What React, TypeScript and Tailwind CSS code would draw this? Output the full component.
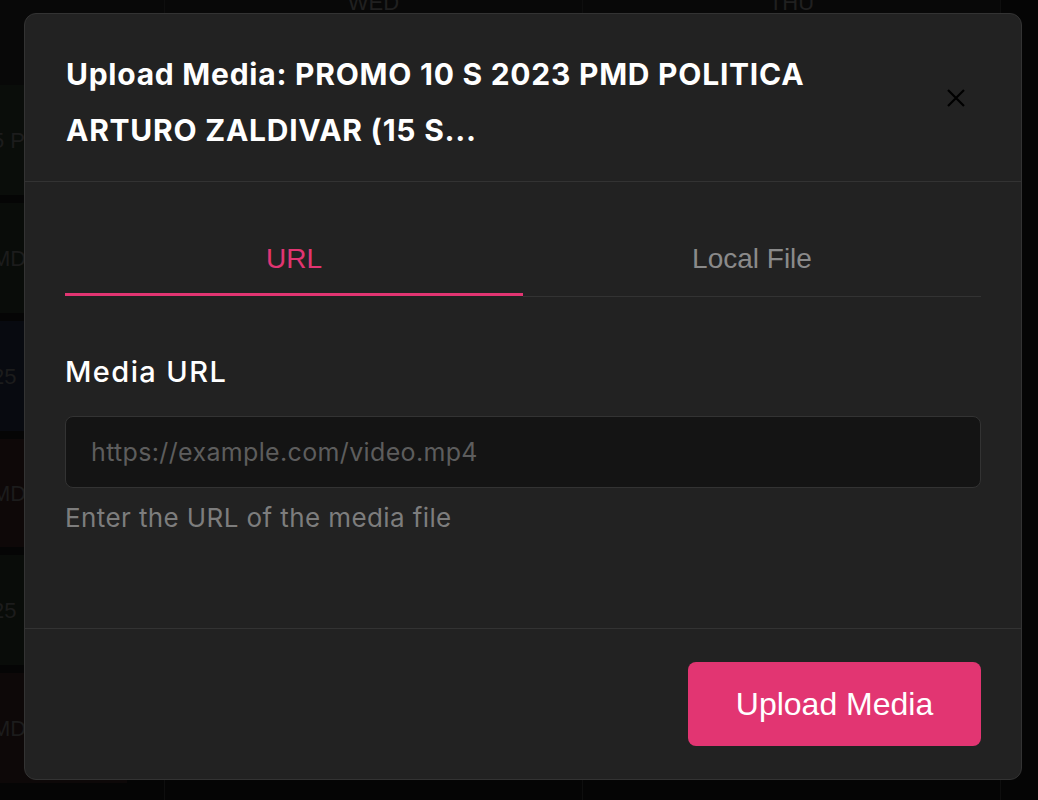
import { useState } from "react";

const PINK = "#e23572";

type Tab = "url" | "file";

const leftEvents = [
  { label: "5 P", tone: "bg-[#0a0d0a]", h: "h-[110px]" },
  { label: "MD", tone: "bg-[#090c09]", h: "h-[110px]" },
  { label: "25", tone: "bg-[#080a10]", h: "h-[110px]" },
  { label: "MD", tone: "bg-[#0e0808]", h: "h-[108px]" },
  { label: "25", tone: "bg-[#090c09]", h: "h-[110px]" },
  { label: "MD", tone: "bg-[#0d0808]", h: "h-[110px]" },
];

function CalendarBackdrop() {
  return (
    <div className="grid h-full grid-cols-[165px_418px_418px_1fr] bg-[#050505] font-['Liberation_Sans',sans-serif]">
      <div className="flex flex-col border-r border-[#0e0e0e]">
        <div className="h-[85px] shrink-0 bg-[#080808]" />
        <div className="flex flex-col gap-[8px] pr-[37px]">
          {leftEvents.map((e, i) => (
            <div
              key={i}
              className={`${e.tone} ${e.h} flex items-center text-[22px] text-[#1c1c1c]`}
            >
              <span className="-ml-[8px]">{e.label}</span>
            </div>
          ))}
        </div>
      </div>
      <div className="flex flex-col border-r border-[#0e0e0e]">
        <div className="flex h-[85px] justify-center bg-[#080808] text-[22px] leading-none text-[#202020]">
          <span className="-mt-[8px]">WED</span>
        </div>
      </div>
      <div className="flex flex-col border-r border-[#0e0e0e]">
        <div className="flex h-[85px] justify-center bg-[#080808] text-[22px] leading-none text-[#202020]">
          <span className="-mt-[8px]">THU</span>
        </div>
      </div>
      <div className="bg-[#050505]" />
    </div>
  );
}

function CloseIcon() {
  return (
    <svg width="20" height="20" viewBox="0 0 20 20" fill="none">
      <path d="M2 2L18 18M18 2L2 18" stroke="#000" strokeWidth="2.2" />
    </svg>
  );
}

export default function App() {
  const [tab, setTab] = useState<Tab>("url");
  const [url, setUrl] = useState("");

  const tabClass = (active: boolean) =>
    active
      ? "flex h-[74px] flex-1 items-start justify-center border-b-[3px] border-[#e23572] pt-[16px] text-[28px] text-[#e23572]"
      : "flex h-[75px] flex-1 items-start justify-center border-b border-[#333] pt-[16px] text-[28px] text-[#8a8a8a]";

  return (
    <div className="relative h-[800px] w-full overflow-hidden bg-[#050505]">
      <CalendarBackdrop />
      <div className="absolute inset-0 pl-[24px] pt-[13px]">
        <div className="flex h-[767px] w-[998px] flex-col rounded-[12px] border border-[#333] bg-[#222] font-['Inter',sans-serif]">
          <div className="flex h-[168px] shrink-0 items-center justify-between border-b border-[#333] pl-[41px] pr-[47px] pt-[8px]">
            <h2 className="text-[30px] font-bold leading-[56px] tracking-[0.75px] text-white">
              <span className="block">Upload Media: PROMO 10 S 2023 PMD POLITICA</span>
              <span className="block">ARTURO ZALDIVAR (15 S...</span>
            </h2>
            <button className="-mt-[8px] flex h-[36px] w-[36px] items-center justify-center">
              <CloseIcon />
            </button>
          </div>

          <div className="flex flex-1 flex-col px-[40px] pt-[40px]">
            <div className="flex items-start font-['Liberation_Sans',sans-serif]">
              <button onClick={() => setTab("url")} className={tabClass(tab === "url")}>
                URL
              </button>
              <button onClick={() => setTab("file")} className={tabClass(tab === "file")}>
                Local File
              </button>
            </div>

            <label className="mt-[55px] text-[29px] font-medium leading-[40px] tracking-[1.4px] text-white">
              Media URL
            </label>
            <input
              value={url}
              onChange={(e) => setUrl(e.target.value)}
              placeholder="https://example.com/video.mp4"
              className="mt-[24px] h-[72px] w-full rounded-[8px] border border-[#333] bg-[#141414] px-[25px] text-[25px] tracking-[0.35px] text-white outline-none placeholder:text-[#5d5d5d]"
            />
            <p className="mt-[12px] text-[26px] leading-[36px] tracking-[0.4px] text-[#7d7d7d]">
              Enter the URL of the media file
            </p>
          </div>

          <div className="flex h-[151px] shrink-0 items-start justify-end border-t border-[#333] px-[40px] pt-[33px]">
            <button
              className="h-[84px] w-[293px] rounded-[8px] font-['Liberation_Sans',sans-serif] text-[32px] text-white"
              style={{ backgroundColor: PINK }}
            >
              Upload Media
            </button>
          </div>
        </div>
      </div>
    </div>
  );
}
